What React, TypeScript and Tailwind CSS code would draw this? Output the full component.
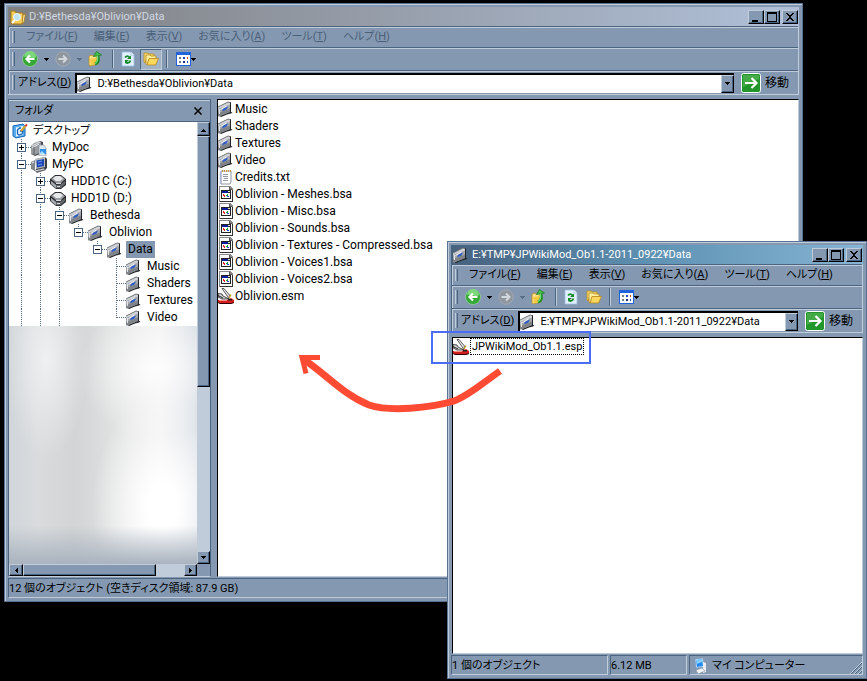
import { ReactNode } from "react"
import clsx from "clsx"

type IconProps = { className?: string }

const FolderIcon = ({ className }: IconProps) => (
  <svg viewBox="0 0 16 16" className={clsx("h-4 w-4 shrink-0", className)} aria-hidden="true">
    <path d="M1 14.500 12 10.500V1l1 .500v9.500l1.500.500-1.500 1-4 1-6 2.500z" fill="#222427" />
    <path d="M0 6 10 1l2 .500v9.500L1 15.500l-1-.500z" fill="#a4a7ab" />
    <path d="M0 6 10 1l2 .500v2L0 8z" fill="#d0d2d5" />
    <path d="M0 12 12 7.500v3.500L1 15.500l-1-.500z" fill="#808388" />
    <path d="M0 6 10 1l2 .500" fill="none" stroke="#5d6065" strokeWidth=".8" />
    <path d="M1.500 8v5" stroke="#e3e5e8" />
    <path d="M4 9.500 5.500 7.500l4.500-2-1.500 3L5 10z" fill="#2a5ac8" />
    <path d="m2.500 8.500 6-3.500" stroke="#f4f7fb" />
  </svg>
)

const DriveIcon = ({ className }: IconProps) => (
  <svg viewBox="0 0 16 16" className={clsx("h-4 w-4 shrink-0", className)} aria-hidden="true">
    <path d="M0 5 5 1h6l5 4v6l-5 4H6l-6-5z" fill="#2e3033" />
    <path d="M1 5 5 2h6l4 3-4 4H6z" fill="#9a9da1" />
    <path d="M3 4.500 6 2h4l3 2.500L10 7H6z" fill="#e6e8ea" />
    <path d="M1 7l5 4h4l5-4v3l-4 4H6l-5-4z" fill="#63666a" />
    <path d="M1 7l5 4v3L1 10z" fill="#a7aaae" />
    <path d="M6 9.500h5M7 12.500h3" stroke="#d6d8db" />
  </svg>
)

const DesktopIcon = () => (
  <svg viewBox="0 0 16 16" className="h-4 w-4 shrink-0" aria-hidden="true">
    <path d="M1 3 11 1l2 2v10l-9 2-3-2z" fill="#58aef0" stroke="#1767b8" />
    <path d="M4 4.500 11 3v9l-7 1.500z" fill="#e8f6ff" />
    <path d="M9 5H7.500L5.500 7v4l1.500 1 3-1 1-3H8" fill="none" stroke="#1a61b4" strokeWidth="1.300" />
    <path d="m9 8 4.500-5" stroke="#d9a526" strokeWidth="2" />
    <path d="m13.500 3 1.500-1.500" stroke="#d33" strokeWidth="2" />
  </svg>
)

const DocsIcon = () => (
  <svg viewBox="0 0 16 16" className="h-4 w-4 shrink-0" aria-hidden="true">
    <path d="M0 6 9 1l3 1v11l-8 3-4-2z" fill="#45484c" />
    <path d="M0 6 3 3l6-2 1 1v10l-6 3-4-1z" fill="#989ca1" />
    <path d="M1 6 9 2M1 8l7-4" stroke="#e8eaec" />
    <path d="M3 7v8" stroke="#5d6065" />
    <path d="M8 5h5l2 3v8H8z" fill="#dfe7ee" stroke="#85919c" strokeWidth=".7" />
    <path d="M9 9h6v5H9z" fill="#2c8ee8" />
    <path d="m9 13 2-2 3 3H9z" fill="#a8e0ff" />
  </svg>
)

const PcIcon = () => (
  <svg viewBox="0 0 16 16" className="h-4 w-4 shrink-0" aria-hidden="true">
    <path d="M5 2 14 0l2 2v9l-2 2-9 1z" fill="#3b3e43" />
    <path d="M4 2 14 0v10l-9 2z" fill="#b6babf" />
    <path d="M5.500 3.500 13 2v7l-7 1.500z" fill="#1c46b4" />
    <path d="M7 5 11 4M7 8l4-1" stroke="#6f9cf0" />
    <path d="M0 5 4 3v11l-4-2z" fill="#85898f" />
    <path d="M1 6l2-1" stroke="#eceef0" />
    <path d="m3 13 10-2 2 2-9 3z" fill="#65696e" />
    <path d="m4 14 9-2" stroke="#d8dbdf" />
  </svg>
)

const TextFileIcon = () => (
  <svg viewBox="0 0 16 16" className="h-4 w-4 shrink-0" aria-hidden="true">
    <path d="M3 2h10v11l-1 2H3z" fill="#fff" stroke="#8b93a8" />
    <path d="M2.500 3v12" stroke="#aab5d8" strokeWidth="1.500" />
    <path d="M4 2h9" stroke="#cf9a3a" strokeWidth="2" strokeDasharray="1 1" />
    <path d="M5 5.500h5M5 7.500h5M6 9.500h4M5 11.500h5" stroke="#8f96a5" />
  </svg>
)

const BsaIcon = () => (
  <svg viewBox="0 0 16 16" className="h-4 w-4 shrink-0" shapeRendering="crispEdges" aria-hidden="true">
    <path d="M1 0h11l3 3v13H1z" fill="#8a8a8a" />
    <path d="M2 1h9v3h3v11H2z" fill="#fff" />
    <path d="M11 1h1v2h2v1h-3z" fill="#555" />
    <path d="M14 4h1v12H2v-1h12z" fill="#333" />
    <path d="M3 4h10v9H3z" fill="#222" />
    <path d="M4 5h6v2H4z" fill="#0a1c9a" />
    <path d="M10 5h2v1h-2z" fill="#ddd" />
    <path d="M4 7h8v5H4z" fill="#fff" />
    <path d="M5 8h1v1h1v2H6v-1H5z" fill="#e02020" />
    <path d="M8 9h1V8h1v2H8z" fill="#1b9c3c" />
    <path d="M9 10h2v1H9z" fill="#2443e0" />
  </svg>
)

// swiss army knife used for plugin files
const KnifeIcon = () => (
  <svg viewBox="0 0 16 16" className="h-4 w-4 shrink-0" aria-hidden="true">
    <path d="M4 .500h2L11.500 7l-.500 3.500z" fill="#e4e6e8" stroke="#333" strokeWidth=".8" />
    <path d="m11 10 2-3.500" stroke="#c7a72e" strokeWidth="1.500" />
    <path d="M0 5.500 4 6l1 2 6 3H4L0 9z" fill="#d4d4d4" stroke="#222" strokeWidth=".8" />
    <path d="M0 7.500 5 10" stroke="#222" />
    <path d="M0 12h9l4-2 3 2v2.500l-2 1H2L0 14z" fill="#d3201f" />
    <path d="M1 12.500h8" stroke="#ff8c80" />
    <path d="M0 14.500l2 1h11l3-1" fill="none" stroke="#300" />
    <path d="M10 11h4v1.500h-4z" fill="#222" />
  </svg>
)

const OpenFolder = ({ className }: IconProps) => (
  <svg viewBox="0 0 16 16" className={clsx("h-4 w-4 shrink-0", className)} aria-hidden="true">
    <path d="M1 2h4l1 1h5v3H4l-2 6-1-1z" fill="#f7dc72" stroke="#b98a1e" strokeWidth=".8" />
    <path d="M3 4h4l1 1h5v3H6l-2 6-1-1z" fill="#fff0a0" stroke="#b98a1e" strokeWidth=".8" />
    <path d="M6 7.500h9.500l-3 6.500H4z" fill="#fbd85c" stroke="#b98a1e" strokeWidth=".8" />
  </svg>
)

const SearchFolder = () => (
  <svg viewBox="0 0 16 16" className="h-4 w-4 shrink-0" aria-hidden="true">
    <path d="M1 2h4l1 2h7v9l-1 2H2l-1-1z" fill="#f8ce5a" stroke="#a8791a" />
    <path d="M13 6l2.500-1-1.500 8-2 2z" fill="#fbe69a" stroke="#a8791a" strokeWidth=".8" />
    <circle cx="7" cy="8" r="3.500" fill="#bfe4f8" stroke="#eef8ff" />
    <path d="m5 11-3 3" stroke="#fff" strokeWidth="2" />
  </svg>
)

const BackIcon = () => (
  <svg viewBox="0 0 16 16" className="h-4 w-4" aria-hidden="true">
    <circle cx="8" cy="8" r="7.500" fill="#35a837" stroke="#a9dba4" strokeWidth=".6" />
    <path d="M2 6a6 6 0 0 1 12 0c-3 3-9-1-12 0z" fill="#7bd67c" />
    <path d="M12.500 8H5M8 4.500 4.500 8 8 11.500" fill="none" stroke="#fff" strokeWidth="2.200" />
  </svg>
)

const ForwardIcon = () => (
  <svg viewBox="0 0 16 16" className="h-4 w-4" aria-hidden="true">
    <circle cx="8" cy="8" r="7.200" fill="#8f969e" stroke="#a7afb8" strokeWidth=".8" />
    <path d="M3.500 8h7.500M8 4.500 11.500 8 8 11.500" fill="none" stroke="#d3d8dd" strokeWidth="2" />
  </svg>
)

const UpIcon = () => (
  <svg viewBox="0 0 16 16" className="h-4 w-4" aria-hidden="true">
    <path d="M2 5.500 4 4l2 1 5-1v9l-8 2-1-1z" fill="#fbe184" stroke="#b98a1e" strokeWidth=".8" />
    <path d="M3 8l7-1-1 6-5 1z" fill="#f6c944" />
    <path d="M8 13c3-1 4-4 3-8" fill="none" stroke="#1d8a26" strokeWidth="3" />
    <path d="M6.500 5.500 9.500.500 14.500 4z" fill="#45c24a" stroke="#1d7a24" strokeWidth=".8" />
    <path d="M8 12.500c2-1 3-4 2.500-8" fill="none" stroke="#6fdb70" strokeWidth="1.200" />
  </svg>
)

const RefreshIcon = () => (
  <svg viewBox="0 0 16 16" className="h-4 w-4" aria-hidden="true">
    <path d="M2 1h9l3 3v11H2z" fill="#e3f0ff" stroke="#9fbce0" strokeWidth=".8" />
    <path d="M11 1v3h3" fill="#fff" stroke="#9fbce0" strokeWidth=".8" />
    <path d="M5 6.500c1.500-2 4-2 4.500.500M10.500 9.500c-1 3-4 3-5 1.500" fill="none" stroke="#148a2a" strokeWidth="1.800" />
    <path d="M7 8h4V4.500zM9 9H5v3.500z" fill="#148a2a" />
  </svg>
)

const ViewsIcon = () => (
  <svg viewBox="0 0 16 16" className="h-4 w-4" shapeRendering="crispEdges" aria-hidden="true">
    <path d="M1 1h15v14H1z" fill="#2163dc" />
    <path d="M2 4h13v10H2z" fill="#fff" />
    <path d="M4 6h2v2H4zM4 10h2v2H4z" fill="#777c88" />
    <path d="M8 6h2v2H8zM12 10h1v2h-1z" fill="#2443c0" />
    <path d="M12 6h1v2h-1z" fill="#d2452f" />
    <path d="M8 10h2v2H8z" fill="#21307c" />
  </svg>
)

const GoIcon = () => (
  <svg viewBox="0 0 20 20" className="h-5 w-5 shrink-0" aria-hidden="true">
    <rect x=".5" y=".5" width="19" height="19" rx="2" fill="#22962b" stroke="#fff" />
    <path d="M2 2h16v4L2 14z" fill="#5cb55a" opacity=".6" />
    <path d="M4 10h11M10.500 5 15.500 10l-5 5" fill="none" stroke="#fff" strokeWidth="2.200" />
  </svg>
)

const ComputerIcon = () => (
  <svg viewBox="0 0 16 16" className="h-4 w-4 shrink-0" aria-hidden="true">
    <path d="M3 1 11 0l1 9-8 1z" fill="#d4ecff" stroke="#6d92bb" strokeWidth=".6" />
    <path d="M4 2 10 1l1 7-6 1z" fill="#2187ee" />
    <path d="M4 2 10 1v3L5 6z" fill="#84ccff" />
    <path d="m11 4 3 1v9l-3 1z" fill="#e9edf2" />
    <path d="m4 12 6-2 3 3-7 3z" fill="#eff3f7" stroke="#8392a3" strokeWidth=".6" />
  </svg>
)

const Triangle = ({ dir = "down", className }: { dir?: "up" | "down" | "left" | "right"; className?: string }) => {
  const paths = {
    up: "M0 5h5V4H4V3H3V2H2v1H1v1H0z",
    down: "M0 1h5v1H4v1H3v1H2V3H1V2H0z",
    left: "M4 0v5H3V4H2V3H1V2h1V1h1V0z",
    right: "M1 0v5h1V4h1V3h1V2H3V1H2V0z",
  }
  return (
    <svg viewBox="0 0 5 5" className={clsx("h-[5px] w-[5px] shrink-0", className)} shapeRendering="crispEdges" aria-hidden="true">
      <path d={paths[dir]} fill="currentColor" />
    </svg>
  )
}

const raised =
  "border border-t-[#c0ccda] border-l-[#c0ccda] border-r-black border-b-black bg-[#8499b1] shadow-[inset_-1px_-1px_0_#4b6580]"

const Grip = () => (
  <span className="my-1 w-[3px] shrink-0 self-stretch border-l border-r border-l-[#c0ccda] border-r-[#4b6580]" />
)

const Divider = () => (
  <span className="mx-1 h-[18px] w-[2px] shrink-0 border-l border-r border-l-[#4b6580] border-r-[#c0ccda]" />
)

const Bar = ({ children, className }: { children: ReactNode; className?: string }) => (
  <div
    className={clsx(
      "flex items-center border-t border-l border-[#4b6580] pl-[3px] shadow-[inset_1px_1px_0_#c0ccda]",
      className
    )}
  >
    <Grip />
    {children}
  </div>
)

const CaptionButton = ({ label, children }: { label: string; children: ReactNode }) => (
  <button aria-label={label} className={clsx("flex h-[14px] w-4 items-center justify-center", raised)}>
    <svg viewBox="0 0 10 10" className="h-[10px] w-[10px]" shapeRendering="crispEdges" aria-hidden="true">
      {children}
    </svg>
  </button>
)

const menus = [
  ["ファイル", "F"],
  ["編集", "E"],
  ["表示", "V"],
  ["お気に入り", "A"],
  ["ツール", "T"],
  ["ヘルプ", "H"],
]

type ExplorerProps = {
  className: string
  titleClass: string
  title: string
  icon: ReactNode
  inactive?: boolean
  id: string
  children: ReactNode
  status: ReactNode
}

const Explorer = ({ className, titleClass, title, icon, inactive, id, children, status }: ExplorerProps) => (
  <section
    className={clsx(
      "absolute flex flex-col border border-[#5a7390] bg-[#8499b1] p-[3px] shadow-[inset_1px_1px_0_#c0ccda]",
      className
    )}
  >
    <header className={clsx("flex h-[19px] shrink-0 items-center pr-px pl-[2px]", titleClass)}>
      {icon}
      <h1 className="min-w-0 flex-1 truncate pl-[3px]">{title}</h1>
      <CaptionButton label="最小化">
        <path d="M1 8h6v2H1z" />
      </CaptionButton>
      <CaptionButton label="最大化">
        <path d="M0 0h10v10H0zM1 2v7h8V2z" fillRule="evenodd" />
      </CaptionButton>
      <span className="w-[2px]" />
      <CaptionButton label="閉じる">
        <path d="M1 1h2v1h1v1h2V2h1V1h2v1H8v1H7v1H6v2h1v1h1v1h1v1H7V8H6V7H4v1H3v1H1V8h1V7h1V6h1V4H3V3H2V2H1z" />
      </CaptionButton>
    </header>

    <div className="shrink-0 border-r border-b border-[#c0ccda]">
      <Bar className="h-[21px]">
        <nav className={clsx("flex gap-4 pl-[11px]", inactive && "text-[#4b6078]")}>
          {menus.map(([label, key]) => (
            <button key={key} className="whitespace-nowrap">
              {label}(<u>{key}</u>)
            </button>
          ))}
        </nav>
      </Bar>
      <Bar className="h-[23px]">
        <div className="flex items-center pl-[7px]">
          <button aria-label="戻る" className="flex items-center gap-[6px]">
            <BackIcon />
            <Triangle />
          </button>
          <button aria-label="進む" className="ml-[6px] flex items-center gap-[6px] text-[#566d88]">
            <ForwardIcon />
            <Triangle />
          </button>
          <button aria-label="上へ" className="mx-[5px]">
            <UpIcon />
          </button>
          <Divider />
          <button aria-label="更新" className="mx-[2px]">
            <RefreshIcon />
          </button>
          <button
            aria-label="フォルダ"
            className={clsx(
              "ml-[2px] flex h-[21px] w-[22px] items-center justify-center border",
              inactive
                ? "border-t-[#4b6580] border-l-[#4b6580] border-r-[#c0ccda] border-b-[#c0ccda] bg-[#a3b3c6]"
                : "border-transparent"
            )}
          >
            <OpenFolder />
          </button>
          <Divider />
          <button aria-label="表示" className="ml-[3px] flex items-center">
            <ViewsIcon />
            <Triangle />
          </button>
        </div>
      </Bar>
      <Bar className="h-6">
        <label htmlFor={id} className="shrink-0 pr-1 pl-[3px]">
          アドレス(<u>D</u>)
        </label>
        <div className="flex h-5 min-w-0 flex-1 items-center border-t-2 border-l-2 border-black bg-white">
          <FolderIcon />
          <input id={id} defaultValue={title} className="min-w-0 flex-1 pl-1 outline-none" />
          <button aria-label="履歴" className={clsx("flex h-[18px] w-[13px] items-center justify-center", raised)}>
            <Triangle />
          </button>
        </div>
        <button className="flex items-center gap-1 pr-[9px] pl-[7px] text-[12px]">
          <GoIcon />
          移動
        </button>
      </Bar>
    </div>

    {children}

    <footer className="flex h-5 shrink-0 gap-[2px]">{status}</footer>
  </section>
)

const Pane = ({ children, className }: { children?: ReactNode; className?: string }) => (
  <div
    className={clsx(
      "flex items-center border border-t-[#4b6580] border-l-[#4b6580] border-r-[#c0ccda] border-b-[#c0ccda] pt-[2px] whitespace-nowrap",
      className
    )}
  >
    {children}
  </div>
)

type Node = {
  name: string
  icon: ReactNode
  // one letter per indent column: p plus, m minus, M minus on a last child,
  // l line, b blank, t tee, e end
  cols: string
  selected?: boolean
}

const tree: Node[] = [
  { name: "デスクトップ", icon: <DesktopIcon />, cols: "" },
  { name: "MyDoc", icon: <DocsIcon />, cols: "p" },
  { name: "MyPC", icon: <PcIcon />, cols: "m" },
  { name: "HDD1C (C:)", icon: <DriveIcon />, cols: "lp" },
  { name: "HDD1D (D:)", icon: <DriveIcon />, cols: "lm" },
  { name: "Bethesda", icon: <FolderIcon />, cols: "llm" },
  { name: "Oblivion", icon: <FolderIcon />, cols: "lllM" },
  { name: "Data", icon: <FolderIcon />, cols: "lllbM", selected: true },
  { name: "Music", icon: <FolderIcon />, cols: "lllbbt" },
  { name: "Shaders", icon: <FolderIcon />, cols: "lllbbt" },
  { name: "Textures", icon: <FolderIcon />, cols: "lllbbt" },
  { name: "Video", icon: <FolderIcon />, cols: "lllbbe" },
]

const TreeCell = ({ kind }: { kind: string }) => {
  const box = "pmM".includes(kind)
  return (
    <svg viewBox="0 0 19 17" className="h-[17px] w-[19px] shrink-0" shapeRendering="crispEdges" aria-hidden="true">
      {kind !== "b" && (
        <path d={kind === "M" || kind === "e" ? "M9.500 0v9" : "M9.500 0v17"} stroke="#566d88" strokeDasharray="1 1" />
      )}
      {kind !== "b" && kind !== "l" && <path d="M10 8.500h9" stroke="#566d88" strokeDasharray="1 1" />}
      {box && <rect x="5.500" y="4.500" width="8" height="8" fill="#fff" stroke="#4b6580" />}
      {box && <path d="M7 8.500h5" stroke="#000" />}
      {kind === "p" && <path d="M9.500 6v5" stroke="#000" />}
    </svg>
  )
}

const files = [
  { name: "Music", icon: <FolderIcon /> },
  { name: "Shaders", icon: <FolderIcon /> },
  { name: "Textures", icon: <FolderIcon /> },
  { name: "Video", icon: <FolderIcon /> },
  { name: "Credits.txt", icon: <TextFileIcon /> },
  { name: "Oblivion - Meshes.bsa", icon: <BsaIcon /> },
  { name: "Oblivion - Misc.bsa", icon: <BsaIcon /> },
  { name: "Oblivion - Sounds.bsa", icon: <BsaIcon /> },
  { name: "Oblivion - Textures - Compressed.bsa", icon: <BsaIcon /> },
  { name: "Oblivion - Voices1.bsa", icon: <BsaIcon /> },
  { name: "Oblivion - Voices2.bsa", icon: <BsaIcon /> },
  { name: "Oblivion.esm", icon: <KnifeIcon /> },
]

const listFrame = "min-w-0 flex-1 border border-t-black border-l-black border-r-[#c0ccda] border-b-[#c0ccda] bg-white"

const FolderTree = () => (
  <aside className="flex w-[203px] shrink-0 flex-col border border-t-[#4b6580] border-l-[#4b6580] border-r-[#4b6580] border-b-[#c0ccda]">
    <div className="flex h-[22px] shrink-0 items-center justify-between border-t border-b border-t-[#c0ccda] border-b-[#4b6580] pr-2 pl-[6px]">
      フォルダ
      <button aria-label="閉じる">
        <svg viewBox="0 0 8 8" className="h-2 w-2" aria-hidden="true">
          <path d="m.5.5 7 7m0-7-7 7" stroke="#000" strokeWidth="1.500" />
        </svg>
      </button>
    </div>
    <div className="flex min-h-0 flex-1">
      <div className="flex min-w-0 flex-1 flex-col bg-white">
        <ul className="shrink-0 pl-[3px] text-[12px]">
          {tree.map((node) => (
            <li key={node.name} className="flex h-[17px] items-center">
              {node.cols.split("").map((kind, i) => (
                <TreeCell key={i} kind={kind} />
              ))}
              {node.icon}
              <span
                className={clsx(
                  "ml-[3px] px-[2px] leading-[17px] whitespace-nowrap",
                  node.cols === "" && "text-[11px]",
                  node.selected && "bg-[#8499b1]"
                )}
              >
                {node.name}
              </span>
            </li>
          ))}
        </ul>
        <div className="flex-1 bg-[linear-gradient(to_top,#a9b3bf_0,transparent_16%),radial-gradient(ellipse_38%_48%_at_82%_76%,#fff_20%,transparent),radial-gradient(ellipse_40%_30%_at_78%_18%,#fdfdfd,transparent),radial-gradient(ellipse_22%_42%_at_20%_14%,#eff0f2,transparent),linear-gradient(to_right,#d0d6da,#d9dbdd_15%,#d2d4d5_35%,#dfe1e1_55%,#efefef_80%,#d6dce3)]" />
      </div>
      <div className="flex w-[13px] shrink-0 flex-col bg-[#c0ccda]">
        <button aria-label="上" className={clsx("flex h-[14px] items-center justify-center", raised)}>
          <Triangle dir="up" />
        </button>
        <div className={clsx("h-[251px]", raised)} />
        <div className="flex-1" />
        <button aria-label="下" className={clsx("flex h-[13px] items-center justify-center", raised)}>
          <Triangle />
        </button>
      </div>
    </div>
    <div className="mr-[13px] flex h-3 shrink-0 bg-[#c0ccda]">
      <button aria-label="左" className={clsx("flex w-[14px] items-center justify-center", raised)}>
        <Triangle dir="left" />
      </button>
      <div className={clsx("w-[133px]", raised)} />
      <div className="flex-1" />
      <button aria-label="右" className={clsx("flex w-[13px] items-center justify-center", raised)}>
        <Triangle dir="right" />
      </button>
    </div>
  </aside>
)

export default function App() {
  return (
    <main className="relative h-screen overflow-hidden bg-black font-[Roboto,'Noto_Sans_CJK_JP',sans-serif] text-[11px] leading-4 text-black [font-feature-settings:'palt']">
      <Explorer
        id="address-data"
        className="top-[3px] right-16 bottom-[79px] left-1"
        titleClass="bg-linear-to-r from-[#7f8082] to-[#b0c0d8] text-[#d0d8e2]"
        title="D:¥Bethesda¥Oblivion¥Data"
        icon={<SearchFolder />}
        inactive
        status={<Pane className="flex-1">12 個のオブジェクト (空きディスク領域: 87.9 GB)</Pane>}
      >
        <div className="mt-1 mb-px flex min-h-0 flex-1 gap-[6px]">
          <FolderTree />
          <ul className={clsx("text-[12px]", listFrame)}>
            {files.map((file) => (
              <li key={file.name} className="flex h-[17px] items-center gap-px">
                {file.icon}
                <span>{file.name}</span>
              </li>
            ))}
          </ul>
        </div>
      </Explorer>

      <Explorer
        id="address-mod"
        className="top-[241px] right-0 bottom-[2px] left-[447px]"
        titleClass="bg-linear-to-r from-[#46627f] via-[#5f93b4] to-[#86b4d2] text-white"
        title="E:¥TMP¥JPWikiMod_Ob1.1-2011_0922¥Data"
        icon={<FolderIcon />}
        status={
          <>
            <Pane className="flex-1">1 個のオブジェクト</Pane>
            <Pane className="w-[77px]">6.12 MB</Pane>
            <Pane className="w-[174px] gap-1 pl-[2px]">
              <ComputerIcon />
              <span className="flex-1">マイ コンピューター</span>
              <svg viewBox="0 0 12 12" className="h-3 w-3 self-end" aria-hidden="true">
                <path d="M0 12 12 0M4 12l8-8M8 12l4-4" stroke="#c0ccda" />
                <path d="m1 12 11-11M5 12l7-7M9 12l3-3" stroke="#4b6580" />
              </svg>
            </Pane>
          </>
        }
      >
        <div className="mt-1 mb-px flex min-h-0 flex-1 pl-px">
          <ul className={listFrame}>
            <li className="flex h-[17px] items-center gap-px">
              <KnifeIcon />
              <span className="border border-dotted border-black px-px leading-[15px]">JPWikiMod_Ob1.1.esp</span>
            </li>
          </ul>
        </div>
      </Explorer>

      {/* drag hint */}
      <div className="absolute top-[331px] left-[431px] h-[33px] w-40 border-2 border-[#4a6cf7]" />
      <svg viewBox="0 0 220 70" className="absolute top-[350px] left-[290px] h-[70px] w-[220px]" aria-hidden="true">
        <path d="M210 21C190 35 178 46 164 51C140 58 100 62 79 55C52 44 35 23 13 9" fill="none" stroke="#ff4b33" strokeWidth="7" />
        <path d="M30 7.500H12l4 16" fill="none" stroke="#ff4b33" strokeWidth="5" />
      </svg>
    </main>
  )
}
